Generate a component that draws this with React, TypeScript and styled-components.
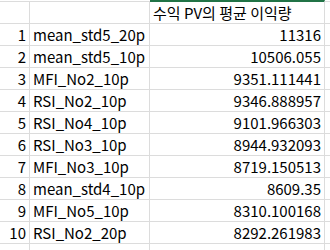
import React from "react";
import styled, { createGlobalStyle } from "styled-components";

const GlobalStyle = createGlobalStyle`
  html, body {
    margin: 0;
    padding: 0;
    background: #ffffff;
  }
  body {
    font-family: "Noto Sans CJK KR", "Noto Sans", sans-serif;
  }
`;

const Sheet = styled.div`
  width: 330px;
  height: 250px;
  overflow: hidden;
  display: grid;
  grid-template-columns: 30px 120px 175px 40px;
  grid-auto-rows: 22px;
  grid-template-rows: 24px;
  color: #000;
  font-size: 15px;
`;

const Cell = styled.div<{ $align?: "left" | "right" }>`
  box-sizing: border-box;
  border-right: 1px solid #dcdcdc;
  border-bottom: 1px solid #dcdcdc;
  display: flex;
  align-items: center;
  justify-content: ${(p) => (p.$align === "right" ? "flex-end" : "flex-start")};
  padding: 0 3px;
  white-space: nowrap;
  overflow: hidden;
  line-height: 1;
`;

const HeaderCell = styled(Cell)<{ $selected?: boolean }>`
  margin-top: ${(p) => (p.$selected ? "0" : "1px")};
  border-top: ${(p) => (p.$selected ? "2px solid #217346" : "1px solid #dcdcdc")};
  padding-top: ${(p) => (p.$selected ? "0" : "1px")};
`;

const rows: [string, string][] = [
  ["mean_std5_20p", "11316"],
  ["mean_std5_10p", "10506.055"],
  ["MFI_No2_10p", "9351.111441"],
  ["RSI_No2_10p", "9346.888957"],
  ["RSI_No4_10p", "9101.966303"],
  ["RSI_No3_10p", "8944.932093"],
  ["MFI_No3_10p", "8719.150513"],
  ["mean_std4_10p", "8609.35"],
  ["MFI_No5_10p", "8310.100168"],
  ["RSI_No2_20p", "8292.261983"],
];

export default function App() {
  return (
    <>
      <GlobalStyle />
      <Sheet>
        <HeaderCell />
        <HeaderCell />
        <HeaderCell $selected>수익 PV의 평균 이익량</HeaderCell>
        <HeaderCell />
        {rows.map(([name, value], i) => (
          <React.Fragment key={name + i}>
            <Cell $align="right">{i + 1}</Cell>
            <Cell>{name}</Cell>
            <Cell $align="right">{value}</Cell>
            <Cell />
          </React.Fragment>
        ))}
        <Cell />
        <Cell />
        <Cell />
        <Cell />
      </Sheet>
    </>
  );
}
